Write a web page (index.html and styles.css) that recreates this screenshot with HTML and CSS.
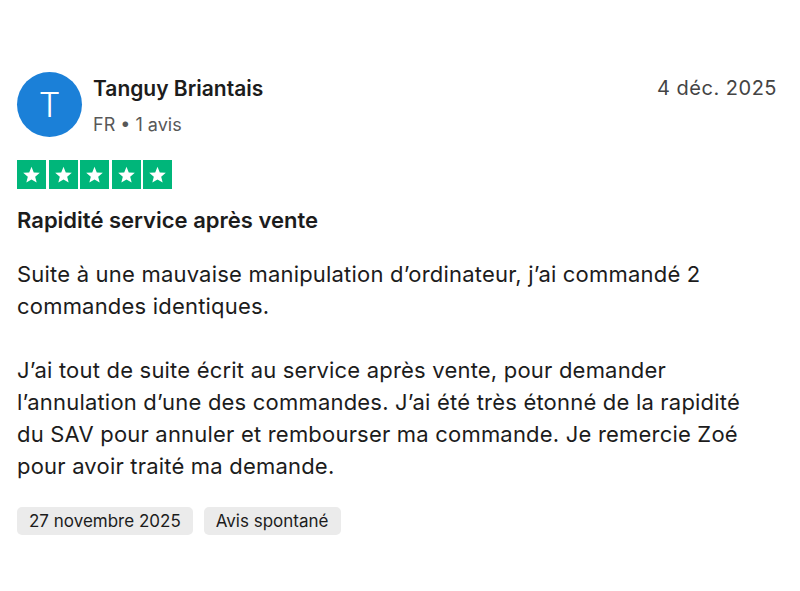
FILE: index.html
```html
<!DOCTYPE html>
<html lang="fr">
<head>
<meta charset="utf-8">
<link rel="stylesheet" href="styles.css">
</head>
<body>
<article class="review">
  <header class="head">
    <div class="avatar">T</div>
    <div class="who">
      <div class="name">Tanguy Briantais</div>
      <div class="meta">FR • 1 avis</div>
    </div>
    <div class="date">4 déc. 2025</div>
  </header>
  <div class="stars">
    <span class="star"><svg viewBox="0 0 24 24"><path d="M12 3.2l2.6 6.4 6.9.5-5.3 4.4 1.7 6.7L12 17.6l-5.9 3.6 1.7-6.7L2.5 10.1l6.9-.5z"/></svg></span>
    <span class="star"><svg viewBox="0 0 24 24"><path d="M12 3.2l2.6 6.4 6.9.5-5.3 4.4 1.7 6.7L12 17.6l-5.9 3.6 1.7-6.7L2.5 10.1l6.9-.5z"/></svg></span>
    <span class="star"><svg viewBox="0 0 24 24"><path d="M12 3.2l2.6 6.4 6.9.5-5.3 4.4 1.7 6.7L12 17.6l-5.9 3.6 1.7-6.7L2.5 10.1l6.9-.5z"/></svg></span>
    <span class="star"><svg viewBox="0 0 24 24"><path d="M12 3.2l2.6 6.4 6.9.5-5.3 4.4 1.7 6.7L12 17.6l-5.9 3.6 1.7-6.7L2.5 10.1l6.9-.5z"/></svg></span>
    <span class="star"><svg viewBox="0 0 24 24"><path d="M12 3.2l2.6 6.4 6.9.5-5.3 4.4 1.7 6.7L12 17.6l-5.9 3.6 1.7-6.7L2.5 10.1l6.9-.5z"/></svg></span>
  </div>
  <h2 class="title">Rapidité service après vente</h2>
  <div class="body">
    <p>Suite à une mauvaise manipulation d’ordinateur, j’ai commandé 2<br>commandes identiques.</p>
    <p>J’ai tout de suite écrit au service après vente, pour demander<br>l’annulation d’une des commandes. J’ai été très étonné de la rapidité<br>du SAV pour annuler et rembourser ma commande. Je remercie Zoé<br>pour avoir traité ma demande.</p>
  </div>
  <div class="tags">
    <span class="tag">27 novembre 2025</span>
    <span class="tag">Avis spontané</span>
  </div>
</article>
</body>
</html>
```
FILE: styles.css
```css
html, body {
  margin: 0;
  padding: 0;
  background: #ffffff;
}
body {
  font-family: Inter, "Noto Sans", sans-serif;
  color: #1c1c1c;
}
.review {
  padding: 72px 23px 0 17px;
}
.head {
  display: flex;
  align-items: flex-start;
}
.avatar {
  width: 65px;
  height: 65px;
  border-radius: 50%;
  background: #1b80d8;
  color: #ffffff;
  display: flex;
  align-items: center;
  justify-content: center;
  font-size: 34px;
  font-weight: 300;
  flex: none;
}
.who {
  margin-left: 11px;
  padding-top: 3px;
  flex: 1;
}
.name {
  font-size: 21px;
  font-weight: 600;
  line-height: 28px;
}
.meta {
  font-size: 18px;
  color: #585858;
  line-height: 24px;
  margin-top: 10px;
}
.date {
  font-size: 20px;
  color: #444444;
  line-height: 28px;
  padding-top: 2px;
  letter-spacing: 0.5px;
}
.stars {
  display: flex;
  gap: 2.5px;
  margin-top: 23px;
}
.star {
  width: 29px;
  height: 29px;
  background: #00b67a;
  display: flex;
  align-items: center;
  justify-content: center;
}
.star svg {
  width: 21px;
  height: 21px;
  fill: #ffffff;
}
.title {
  font-size: 22px;
  font-weight: 600;
  line-height: 28px;
  margin: 17px 0 0;
}
.body {
  font-size: 22px;
  line-height: 32px;
  margin-top: 24px;
  letter-spacing: 0.2px;
}
.body p {
  margin: 0 0 32px;
}
.body p:last-child {
  margin-bottom: 0;
}
.tags {
  display: flex;
  gap: 11px;
  margin-top: 25px;
}
.tag {
  background: #ebebeb;
  border-radius: 5px;
  font-size: 17px;
  line-height: 28px;
  padding: 0 12px;
}
```
